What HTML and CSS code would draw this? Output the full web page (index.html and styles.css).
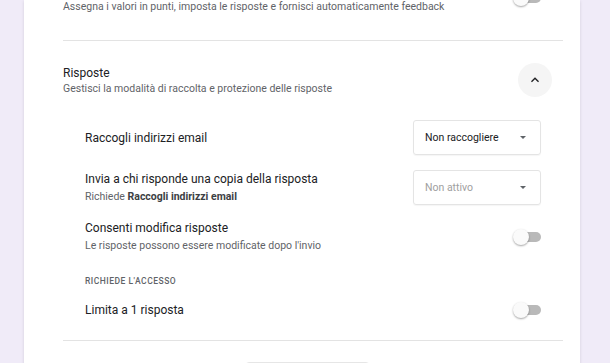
FILE: index.html
```html
<!DOCTYPE html>
<html lang="it">
<head>
    <meta charset="UTF-8">
    <title>Impostazioni - Risposte</title>
    <link rel="stylesheet" href="styles.css">
</head>
<body>
<div class="page">
    <div class="card">
        <section class="group quiz">
            <div class="group-head">
                <div class="head-text">
                    <div class="desc">Assegna i valori in punti, imposta le risposte e fornisci automaticamente feedback</div>
                </div>
                <span class="switch"></span>
            </div>
        </section>
        <section class="group answers">
            <div class="group-head">
                <div class="head-text">
                    <div class="title">Risposte</div>
                    <div class="desc">Gestisci la modalità di raccolta e protezione delle risposte</div>
                </div>
                <button class="expand" type="button">
                    <svg width="16" height="16" viewBox="0 0 24 24"><path d="M12 8l-6 6 1.41 1.41L12 10.83l4.59 4.58L18 14z" fill="#202124"/></svg>
                </button>
            </div>
            <div class="option first">
                <div class="label">Raccogli indirizzi email</div>
                <div class="select">
                    <span>Non raccogliere</span>
                    <i class="caret"></i>
                </div>
            </div>
            <div class="option second">
                <div class="opt-text">
                    <div class="label">Invia a chi risponde una copia della risposta</div>
                    <div class="hint">Richiede <b>Raccogli indirizzi email</b></div>
                </div>
                <div class="select disabled">
                    <span>Non attivo</span>
                    <i class="caret"></i>
                </div>
            </div>
            <div class="option third">
                <div class="opt-text">
                    <div class="label">Consenti modifica risposte</div>
                    <div class="hint">Le risposte possono essere modificate dopo l'invio</div>
                </div>
                <span class="switch"></span>
            </div>
            <div class="subhead">Richiede l'accesso</div>
            <div class="option fourth">
                <div class="label">Limita a 1 risposta</div>
                <span class="switch"></span>
            </div>
        </section>
        <div class="footer">
            <div class="more-btn"></div>
        </div>
    </div>
</div>
</body>
</html>
```

FILE: styles.css
```css
body {
    margin: 0;
    background-color: #f0ebf8;
    font-family: Roboto, "Noto Sans", sans-serif;
    color: #202124;
}

.page {
    padding-left: 24px;
    height: 363px;
    overflow: hidden;
}

.card {
    width: 556px;
    padding: 0 17px 0 39px;
    box-sizing: border-box;
    background-color: #FFFFFF;
    box-shadow: 0 1px 3px rgba(0, 0, 0, 0.12);
}

.group {
    border-bottom: 1px solid #e3e3e3;
}

.quiz {
    padding-bottom: 26px;
}

.answers {
    padding-top: 22px;
    padding-bottom: 22px;
}

.group-head {
    display: flex;
    align-items: center;
    justify-content: space-between;
}

.quiz .group-head {
    align-items: flex-start;
}

.quiz .group-head .switch {
    margin-top: -10px;
    margin-right: 22px;
}

.title {
    font-size: 12px;
    line-height: 16px;
}

.desc {
    font-size: 10.5px;
    line-height: 14px;
    color: #5f6368;
}

.answers .desc {
    margin-top: 1px;
}

.expand {
    width: 34px;
    height: 34px;
    margin-right: 11px;
    border: none;
    border-radius: 50%;
    background-color: #f5f5f5;
    padding: 0;
    display: flex;
    align-items: center;
    justify-content: center;
}

.option {
    display: flex;
    align-items: center;
    justify-content: space-between;
    padding: 0 22px;
}

.option.first {
    margin-top: 23px;
}

.option.second {
    margin-top: 15px;
}

.option.third {
    margin-top: 15px;
}

.option.fourth {
    margin-top: 15px;
}

.label {
    font-size: 12px;
    line-height: 16px;
}

.hint {
    font-size: 10.5px;
    line-height: 14px;
    color: #5f6368;
    margin-top: 3px;
}

.hint b {
    color: #3c4043;
    font-weight: 700;
}

.select {
    width: 128px;
    height: 35px;
    box-sizing: border-box;
    border: 1px solid #e4e4e4;
    border-radius: 3px;
    padding: 0 14px 0 11px;
    display: flex;
    align-items: center;
    justify-content: space-between;
    font-size: 10.5px;
    color: #202124;
    box-shadow: 0 1px 1px rgba(0, 0, 0, 0.04);
}

.select.disabled {
    color: #a0a0a0;
}

.caret {
    width: 0;
    height: 0;
    border-left: 3.5px solid transparent;
    border-right: 3.5px solid transparent;
    border-top: 3.5px solid #5f6368;
}

.subhead {
    margin-top: 22px;
    padding-left: 22px;
    font-size: 8.5px;
    line-height: 12px;
    letter-spacing: 0.5px;
    text-transform: uppercase;
    font-weight: 500;
    color: #5f6368;
}

.switch {
    position: relative;
    width: 28px;
    height: 16px;
    flex-shrink: 0;
}

.switch::before {
    content: "";
    position: absolute;
    right: 0;
    top: 3px;
    width: 24px;
    height: 10px;
    border-radius: 5px;
    background-color: #b9b9b9;
}

.switch::after {
    content: "";
    position: absolute;
    left: 0;
    top: 0;
    width: 16px;
    height: 16px;
    border-radius: 50%;
    background-color: #fafafa;
    box-shadow: 0 1px 2px rgba(0, 0, 0, 0.35);
}

.footer {
    padding-top: 21px;
    display: flex;
    padding-left: 182px;
}

.more-btn {
    width: 123px;
    height: 30px;
    border: 1px solid #e6e6e6;
    border-radius: 4px;
}
```
